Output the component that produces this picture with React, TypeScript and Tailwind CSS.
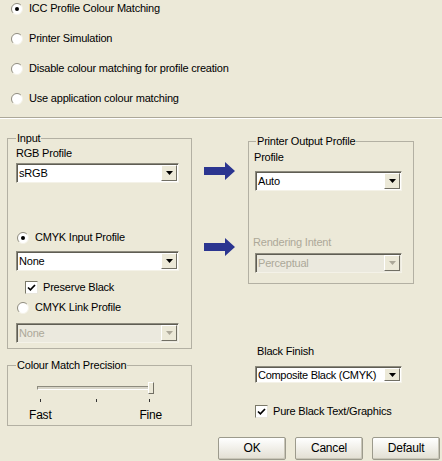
import React from "react";

const Radio = ({ checked = false }: { checked?: boolean }) => (
  <svg width="12" height="12" viewBox="0 0 12 12" className="shrink-0">
    <circle cx="6" cy="6" r="5.5" fill="#fff" />
    <path d="M2.1 9.9A5.5 5.5 0 0 1 9.9 2.1" stroke="#8f8c7f" fill="none" />
    <path d="M9.9 2.1A5.5 5.5 0 0 1 2.1 9.9" stroke="#f4f2e8" fill="none" />
    {checked && <circle cx="6" cy="6" r="2" fill="#000" />}
  </svg>
);

const Check = () => (
  <span className="flex h-[13px] w-[13px] shrink-0 items-center justify-center border border-t-[#7a7868] border-l-[#7a7868] border-r-[#e8e6dc] border-b-[#e8e6dc] bg-white">
    <svg width="9" height="9" viewBox="0 0 9 9">
      <path d="M1 4.5 L3.4 6.8 L8 2" stroke="#000" strokeWidth="1.7" fill="none" />
    </svg>
  </span>
);

const Select = ({
  value,
  className,
  disabled = false,
}: {
  value: string;
  className: string;
  disabled?: boolean;
}) => (
  <div
    className={`flex border border-t-[#8d8b7e] border-l-[#8d8b7e] border-r-[#f4f2e8] border-b-[#f4f2e8] shadow-[inset_1px_1px_0_#5f5d53] ${
      disabled ? "bg-[#ebe9de] text-[#aca899]" : "bg-white text-black"
    } ${className}`}
  >
    <span className="flex-1 self-center whitespace-nowrap pl-[2px] pt-[1px]">{value}</span>
    <span className="my-[1px] mr-[1px] flex w-[16px] shrink-0 items-center justify-center border border-t-white border-l-white border-r-[#716f64] border-b-[#716f64] bg-[#ece9d8]">
      <svg width="7" height="4" viewBox="0 0 7 4">
        <path d="M0 0h7L3.5 4z" fill={disabled ? "#aca899" : "#000"} />
      </svg>
    </span>
  </div>
);

const Arrow = ({ className }: { className: string }) => (
  <svg width="31" height="18" viewBox="0 0 31 18" className={className}>
    <path d="M0 5h21V0l10 9-10 9v-5H0z" fill="#2b3590" />
  </svg>
);

const Button = ({ label }: { label: string }) => (
  <button className="h-[23px] w-[68px] rounded-[2px] border border-[#9c9a8c] bg-gradient-to-b from-white to-[#e2dfd2] text-[12px] shadow-[inset_-1px_-1px_0_#c9c6b8]">
    {label}
  </button>
);

export default function App() {
  const top = [
    { label: "ICC Profile Colour Matching", checked: true },
    { label: "Printer Simulation", checked: false },
    { label: "Disable colour matching for profile creation", checked: false },
    { label: "Use application colour matching", checked: false },
  ];

  return (
    <div className="flex h-[461px] w-[442px] flex-col overflow-hidden bg-[#ece9d8] font-['Liberation_Sans',Arial,sans-serif] text-[11px] leading-[13px] tracking-[-0.2px] text-black">
      <div className="flex flex-col gap-[17px] pl-[11px] pt-[2px]">
        {top.map((r) => (
          <div key={r.label} className="flex h-[13px] items-center gap-[6px]">
            <Radio checked={r.checked} />
            <span>{r.label}</span>
          </div>
        ))}
      </div>

      <div className="mt-[12px] h-[2px] border-t border-b border-t-[#aca899] border-b-white" />

      <div className="flex">
        {/* left column */}
        <div className="ml-[7px] flex w-[185px] flex-col">
          <fieldset className="mt-[13px] border border-[#b3b0a3]">
            <legend className="ml-[8px] px-[1px] leading-[13px]">Input</legend>
            <div className="flex flex-col pb-[5px] pl-[8px]">
              <span className="mt-[2px] h-[13px]">RGB Profile</span>
              <Select value="sRGB" className="mt-[3px] h-[20px] w-[163px]" />
              <div className="ml-[1px] mt-[48px] flex h-[13px] items-center gap-[6px]">
                <Radio checked />
                <span>CMYK Input Profile</span>
              </div>
              <Select value="None" className="mt-[7px] h-[20px] w-[163px]" />
              <div className="ml-[9px] mt-[10px] flex h-[13px] items-center gap-[5px]">
                <Check />
                <span>Preserve Black</span>
              </div>
              <div className="ml-[1px] mt-[7px] flex h-[13px] items-center gap-[6px]">
                <Radio />
                <span>CMYK Link Profile</span>
              </div>
              <Select value="None" disabled className="mt-[9px] h-[20px] w-[163px]" />
            </div>
          </fieldset>

          <fieldset className="mt-[10px] border border-[#b3b0a3]">
            <legend className="ml-[8px] px-[1px] leading-[13px]">Colour Match Precision</legend>
            <div className="flex flex-col pb-[3px]">
              <div className="relative ml-[29px] mt-[10px] h-[22px] w-[118px]">
                <div className="absolute left-0 top-[4px] h-[4px] w-[116px] border border-t-[#8d8b7e] border-l-[#8d8b7e] border-r-white border-b-white bg-[#d8d5c8]" />
                <div className="absolute left-[111px] top-[0px] h-[12px] w-[6px] border border-t-white border-l-white border-r-[#716f64] border-b-[#716f64] bg-[#ece9d8]" />
                <div className="absolute left-[3px] top-[17px] h-[3px] w-[1px] bg-[#333]" />
                <div className="absolute left-[59px] top-[17px] h-[3px] w-[1px] bg-[#333]" />
                <div className="absolute left-[112px] top-[17px] h-[3px] w-[1px] bg-[#333]" />
              </div>
              <div className="mt-[5px] flex h-[13px] pl-[21px] pr-[29px] text-[12px]">
                <span>Fast</span>
                <span className="ml-auto">Fine</span>
              </div>
            </div>
          </fieldset>
        </div>

        {/* right column */}
        <div className="flex w-[250px] flex-col">
          <div className="flex">
            <div className="flex w-[56px] flex-col pl-[12px]">
              <Arrow className="mt-[43px]" />
              <Arrow className="mt-[58px]" />
            </div>
            <fieldset className="mt-[16px] w-[166px] border border-[#b3b0a3]">
              <legend className="ml-[7px] px-[1px] leading-[13px]">Printer Output Profile</legend>
              <div className="flex flex-col pb-[10px] pl-[6px]">
                <span className="-ml-[1px] mt-[3px] h-[13px]">Profile</span>
                <Select value="Auto" className="mt-[7px] h-[20px] w-[147px]" />
                <span className="-ml-[2px] mt-[45px] h-[13px] text-[#aca899]">Rendering Intent</span>
                <Select value="Perceptual" disabled className="mt-[4px] h-[20px] w-[147px]" />
              </div>
            </fieldset>
          </div>

          <span className="ml-[65px] mt-[61px] h-[13px]">Black Finish</span>
          <Select value="Composite Black (CMYK)" className="ml-[63px] mt-[8px] h-[17px] w-[147px] tracking-[-0.3px]" />
          <div className="ml-[63px] mt-[22px] flex h-[13px] items-center gap-[5px]">
            <Check />
            <span>Pure Black Text/Graphics</span>
          </div>
        </div>
      </div>

      <div className="mt-[11px] flex justify-end gap-[9px] pr-[2px]">
        <Button label="OK" />
        <Button label="Cancel" />
        <Button label="Default" />
      </div>
    </div>
  );
}
